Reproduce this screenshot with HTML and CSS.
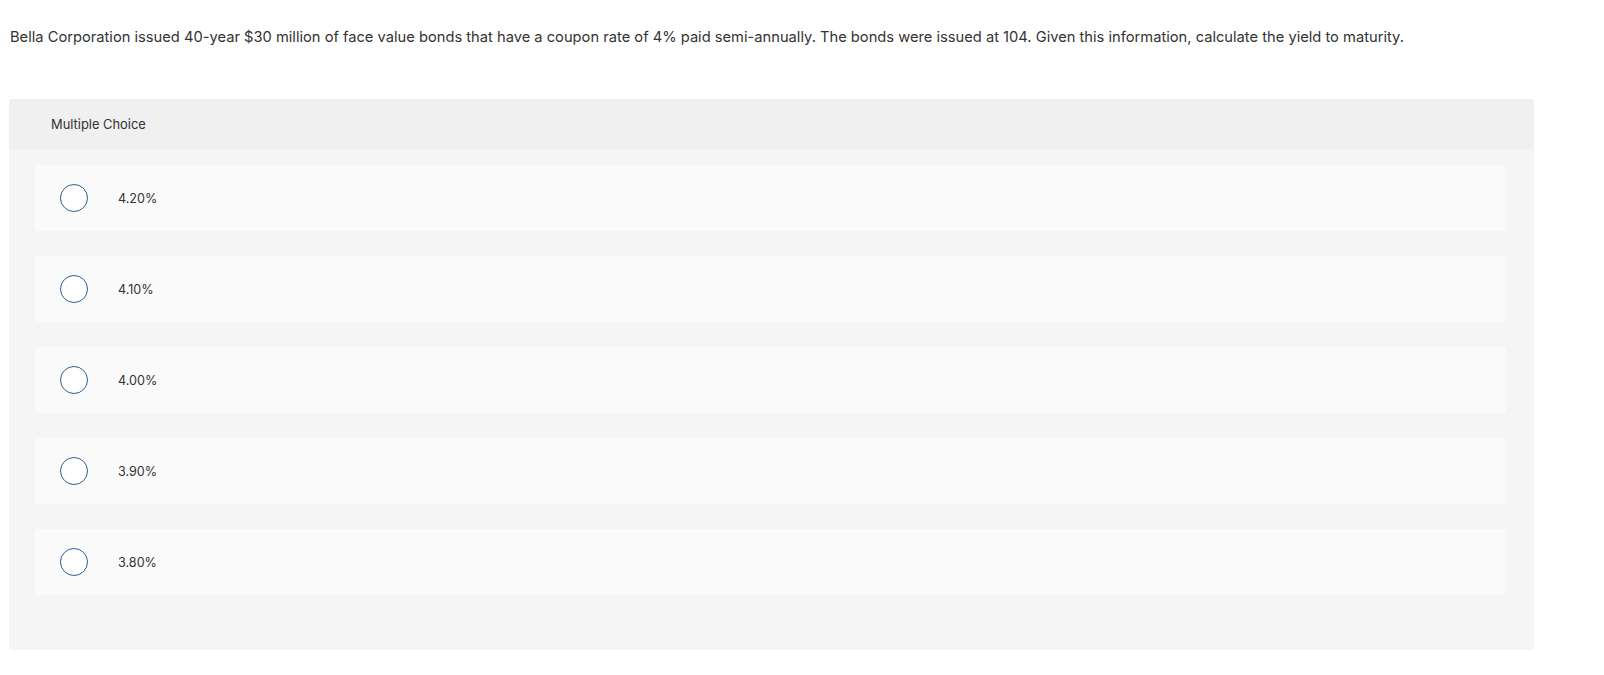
FILE: index.html
```html
<!DOCTYPE html>
<html>
<head>
<meta charset="utf-8">
<link rel="stylesheet" href="styles.css">
</head>
<body>
<div class="page">
  <p class="question">Bella Corporation issued 40-year $30 million of face value bonds that have a coupon rate of 4% paid semi-annually. The bonds were issued at 104. Given this information, calculate the yield to maturity.</p>
  <div class="card">
    <div class="card-header">Multiple Choice</div>
    <div class="card-body">
      <label class="option"><span class="radio"></span><span class="label">4.20%</span></label>
      <label class="option"><span class="radio"></span><span class="label">4.10%</span></label>
      <label class="option"><span class="radio"></span><span class="label">4.00%</span></label>
      <label class="option"><span class="radio"></span><span class="label">3.90%</span></label>
      <label class="option"><span class="radio"></span><span class="label">3.80%</span></label>
    </div>
  </div>
</div>
</body>
</html>
```
FILE: styles.css
```css
* { box-sizing: border-box; }
body {
  margin: 0;
  background: #fff;
  font-family: "Inter", "Liberation Sans", sans-serif;
  color: #333;
}
.page {
  padding: 27px 0 0 9px;
  width: 1534px;
}
.question {
  margin: 0 0 0 1px;
  font-size: 14.7px;
  line-height: 20px;
  color: #333;
}
.card {
  margin-top: 52px;
  border-radius: 3px;
  background: #f5f5f5;
  overflow: hidden;
}
.card-header {
  height: 50px;
  background: #f0f0f0;
  padding-left: 42px;
  display: flex;
  align-items: center;
  font-size: 12.9px;
  color: #333;
}
.card-body {
  padding: 16px 28px 55px 26px;
  display: flex;
  flex-direction: column;
  gap: 25px;
}
.option {
  height: 66px;
  background: #fafafa;
  border-radius: 3px;
  display: flex;
  align-items: center;
  padding-left: 25px;
}
.radio {
  width: 28px;
  height: 28px;
  border-radius: 50%;
  border: 1.5px solid #2c5f94;
  background: #fff;
  flex: none;
}
.label {
  margin-left: 30px;
  font-size: 12.6px;
  color: #333;
}
```
